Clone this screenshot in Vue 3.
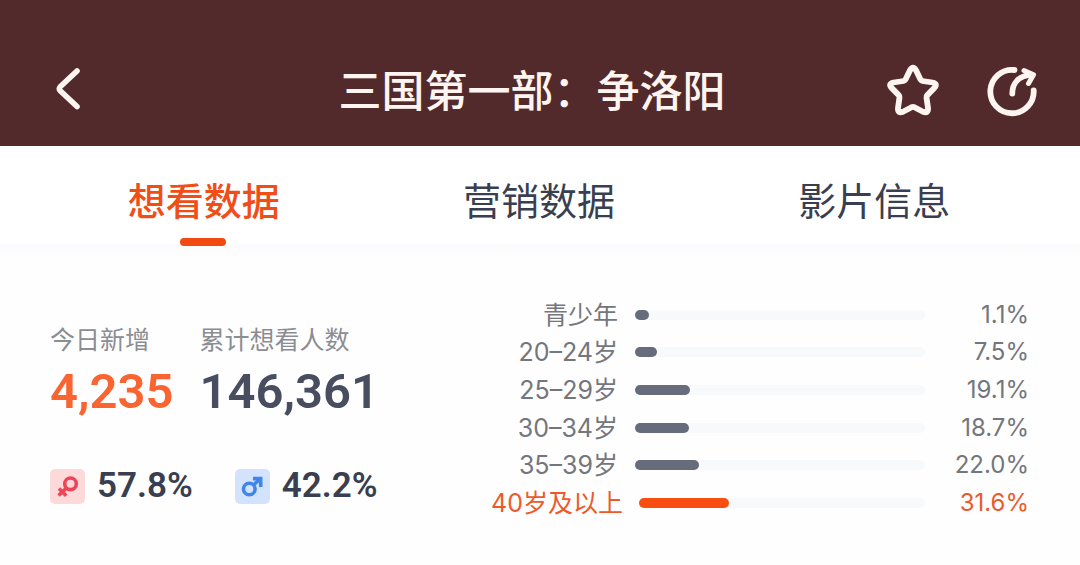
<script setup>
import { ref } from 'vue'

const tabs = ['想看数据', '营销数据', '影片信息']
const active = ref(0)

const ages = [
  { label: '青少年', value: 1.1 },
  { label: '20–24岁', value: 7.5 },
  { label: '25–29岁', value: 19.1 },
  { label: '30–34岁', value: 18.7 },
  { label: '35–39岁', value: 22.0 },
  { label: '40岁及以上', value: 31.6, top: true }
]
</script>

<template>
  <div class="page">
    <header class="bar">
      <button class="icon-btn back" type="button" aria-label="返回">
        <svg width="28" height="50" viewBox="0 0 28 50" fill="none" stroke="currentColor" stroke-width="5.600" stroke-linecap="round" stroke-linejoin="round">
          <path d="M23 5L6.200 20.800Q4.500 22.800 6.200 24.800L23 40.500" />
        </svg>
      </button>
      <h1 class="title">三国第一部：争洛阳</h1>
      <div class="actions">
        <button class="icon-btn" type="button" aria-label="收藏">
          <svg width="56" height="56" viewBox="0 0 56 56" fill="none" stroke="currentColor" stroke-width="5.800" stroke-linejoin="round">
            <path d="M25.200 6.900Q28 2.300 30.800 6.900L35.600 16.700Q36.200 17.800 37.400 18L47.500 19.500Q53.200 20.700 49.400 24.900L42.300 32.100Q41.300 33.100 41.500 34.500L43 45Q43.400 51 38 48.800L29.400 44.200Q28 43.500 26.600 44.200L18 48.800Q12.600 51 13 45L14.500 34.500Q14.700 33.100 13.700 32.100L6.600 24.900Q2.800 20.700 8.500 19.500L18.600 18Q19.800 17.800 20.400 16.700Z" />
          </svg>
        </button>
        <button class="icon-btn" type="button" aria-label="分享">
          <svg width="56" height="56" viewBox="0 0 56 56" fill="none" stroke="currentColor" stroke-width="5.800" stroke-linecap="round" stroke-linejoin="round">
            <path d="M30.500 7A21.700 21.700 0 1 0 49.700 27.500" />
            <path d="M28.300 30.500C28.300 20 35 13.500 45 12" />
            <path d="M40 7.500L49.500 11.800L44.500 20.500" stroke-width="5" />
          </svg>
        </button>
      </div>
    </header>

    <nav class="tabs" role="tablist">
      <button
        v-for="(tab, i) in tabs"
        :key="tab"
        class="tab"
        :class="{ active: active === i }"
        type="button"
        role="tab"
        :aria-selected="active === i"
        @click="active = i"
      >{{ tab }}</button>
    </nav>

    <main class="content">
      <section class="summary">
        <dl class="totals">
          <div class="total today">
            <dt>今日新增</dt>
            <dd>4,235</dd>
          </div>
          <div class="total">
            <dt>累计想看人数</dt>
            <dd>146,361</dd>
          </div>
        </dl>
        <div class="genders">
          <div class="gender">
            <span class="badge female">
              <svg width="35" height="35" viewBox="0 0 35 35" fill="none" stroke="currentColor" stroke-width="3.600" role="img" aria-label="女">
                <circle cx="20.500" cy="14.800" r="5.800" />
                <path d="M16.500 19L8.500 26.500M9 19.500L16.200 26.800" />
              </svg>
            </span>
            <span>57.8%</span>
          </div>
          <div class="gender">
            <span class="badge male">
              <svg width="35" height="35" viewBox="0 0 35 35" fill="none" stroke="currentColor" stroke-width="3.600" role="img" aria-label="男">
                <circle cx="14.300" cy="20" r="5.800" />
                <path d="M18.500 16L24.500 10.500" />
                <path d="M18 9.600H25.700V18" />
              </svg>
            </span>
            <span>42.2%</span>
          </div>
        </div>
      </section>

      <ul class="ages">
        <li v-for="age in ages" :key="age.label" class="age" :class="{ top: age.top }">
          <span class="age-label">{{ age.label }}</span>
          <span class="track"><span class="fill" :style="{ width: age.value + '%' }"></span></span>
          <span class="age-value">{{ age.value.toFixed(1) }}%</span>
        </li>
      </ul>
    </main>
  </div>
</template>

<style>
body {
  margin: 0;
  background: #fefefe;
}
</style>

<style scoped>
.page {
  font-family: Inter, "Noto Sans CJK SC", sans-serif;
  color: #393f50;
}

button {
  padding: 0;
  border: 0;
  background: none;
  font: inherit;
  color: inherit;
  cursor: pointer;
}

.bar {
  display: grid;
  grid-template-columns: 1fr auto 1fr;
  align-items: center;
  box-sizing: border-box;
  height: 146px;
  padding: 36px 40px 0 24px;
  background: #522a2b;
  color: #fff5f0;
}

.icon-btn {
  display: flex;
  justify-self: start;
}

.back {
  padding-left: 30px;
}

.title {
  margin: 0;
  font-size: 43px;
  font-weight: 500;
  line-height: 60px;
}

.actions {
  display: flex;
  justify-content: flex-end;
  gap: 43px;
}

.tabs {
  display: grid;
  grid-template-columns: repeat(3, 1fr);
  padding: 0 38px 0 36px;
  background: #fff;
}

.tab {
  position: relative;
  height: 98px;
  padding: 20px 0 8px;
  font-size: 38px;
  line-height: 54px;
}

.tab.active {
  color: #f04d17;
  font-weight: 500;
}

.tab.active::after {
  content: "";
  position: absolute;
  left: 50%;
  bottom: -2px;
  width: 46px;
  height: 8px;
  margin-left: -24px;
  border-radius: 4px;
  background: #f34a12;
}

.content {
  display: flex;
  justify-content: space-between;
  padding: 52px 51px 44px 50px;
  background: linear-gradient(#fbfbfd, #fefefe 16px);
}

.totals {
  display: flex;
  gap: 26px;
  margin: 0;
  padding-top: 26px;
}

.total dt {
  font-size: 25px;
  line-height: 36px;
  color: #8b8d93;
}

.total dd {
  margin: 4px 0 0;
  font-family: Roboto, sans-serif;
  font-size: 49px;
  font-weight: 600;
  line-height: 60px;
  color: #484e60;
}

.total.today dd {
  color: #fa6430;
}

.genders {
  display: flex;
  gap: 42px;
  margin-top: 44px;
}

.gender {
  display: flex;
  align-items: center;
  gap: 12px;
  font-family: Roboto, sans-serif;
  font-size: 35px;
  font-weight: 600;
  line-height: 40px;
}

.badge {
  display: flex;
  border-radius: 5px;
}

.female {
  background: #fdd9da;
  color: #ef4457;
}

.male {
  background: #d4e3fd;
  color: #4285e8;
}

.ages {
  display: grid;
  grid-auto-rows: 1fr;
  flex: 0 1 549px;
  height: 226px;
  margin: 0;
  padding: 0;
  list-style: none;
}

.age {
  display: flex;
  align-items: center;
  font-size: 25px;
  line-height: 36px;
  color: #74767c;
}

.age-label {
  width: 138px;
  margin-right: 17px;
  text-align: right;
  white-space: nowrap;
}

.track {
  flex: 1;
  height: 10px;
  border-radius: 5px;
  background: #f8f9fb;
}

.fill {
  display: block;
  min-width: 14px;
  height: 10px;
  border-radius: 5px;
  background: #676c7c;
}

.age-value {
  width: 104px;
  font-size: 24px;
  text-align: right;
}

.top {
  color: #ec5a2b;
}

.top .age-label {
  width: 143px;
  margin-right: 16px;
}

.top .fill {
  background: #f94e12;
}
</style>
